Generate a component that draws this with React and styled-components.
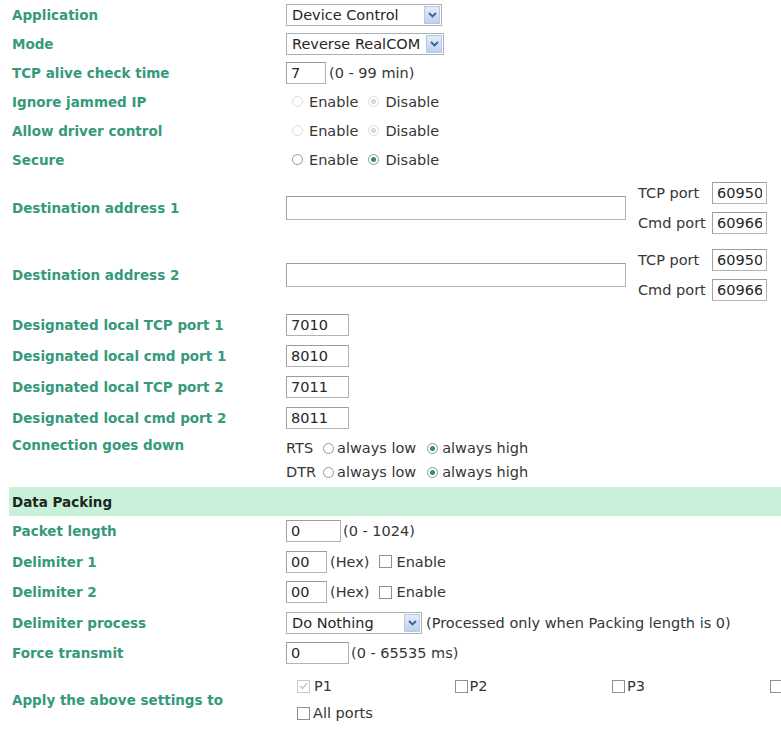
import React from "react";
import styled, { createGlobalStyle } from "styled-components";

const GlobalStyle = createGlobalStyle`
  html, body {
    margin: 0;
    padding: 0;
    background: #ffffff;
    overflow: hidden;
  }
  body {
    font-family: "DejaVu Sans", Verdana, sans-serif;
  }
`;

const Page = styled.div`
  width: 781px;
  height: 731px;
  overflow: hidden;
  padding-left: 12px;
  box-sizing: border-box;
`;

const Row = styled.div`
  display: grid;
  grid-template-columns: 274px 1fr;
  align-items: center;
  height: ${({ $h }) => ($h ? $h : 29)}px;
`;

const Label = styled.div`
  font-size: 13.5px;
  font-weight: bold;
  color: #36997c;
  white-space: nowrap;
  align-self: ${({ $top }) => ($top ? "start" : "center")};
  padding-top: ${({ $top }) => ($top ? "4px" : "0")};
`;

const Value = styled.div`
  display: flex;
  align-items: center;
  font-size: 14.5px;
  color: #363636;
  white-space: nowrap;
  padding-left: ${({ $pad }) => ($pad ? $pad : 0)}px;
`;

const TextBox = styled.input`
  width: ${({ $w }) => ($w ? $w : 63)}px;
  height: ${({ $hgt }) => ($hgt ? $hgt : 22)}px;
  box-sizing: border-box;
  border: 1px solid #b2b2b2;
  border-top-color: #9c9c9c;
  border-left-color: #a2a2a2;
  padding: 0 4px;
  margin: 0;
  font-family: "DejaVu Sans", Verdana, sans-serif;
  font-size: 14.5px;
  color: #262626;
  background: #ffffff;
  outline: none;
`;

const Hint = styled.span`
  margin-left: ${({ $ml }) => ($ml ? $ml : 3)}px;
  color: #363636;
`;

const SelectBox = styled.div`
  width: ${({ $w }) => $w}px;
  height: 22px;
  box-sizing: border-box;
  border: 1px solid #a9b0b9;
  display: flex;
  align-items: center;
  justify-content: space-between;
  padding: 0 1px 0 5px;
  color: #262626;
  background: #ffffff;
`;

const SelectArrow = styled.span`
  width: 16px;
  height: 18px;
  box-sizing: border-box;
  border: 1px solid #b9c8e2;
  background: linear-gradient(#e4ecf9, #bed0ee);
  display: flex;
  align-items: center;
  justify-content: center;
`;

const Radio = styled.span`
  width: 11px;
  height: 11px;
  box-sizing: border-box;
  border-radius: 50%;
  border: 1px solid ${({ $off }) => ($off ? "#d8dcdc" : "#8a9a98")};
  background: #ffffff;
  display: inline-flex;
  align-items: center;
  justify-content: center;
  margin-left: ${({ $ml }) => ($ml ? $ml : 0)}px;
  &::after {
    content: "";
    display: ${({ $on }) => ($on ? "block" : "none")};
    width: 5px;
    height: 5px;
    border-radius: 50%;
    background: ${({ $off }) => ($off ? "#d4d8d8" : "#2f9068")};
  }
`;

const OptText = styled.span`
  margin-left: ${({ $ml }) => ($ml ? $ml : 4)}px;
  color: #363636;
`;

const Check = styled.span`
  width: 13px;
  height: 13px;
  box-sizing: border-box;
  border: 1px solid ${({ $off }) => ($off ? "#cacaca" : "#909090")};
  background: #ffffff;
  display: inline-flex;
  align-items: center;
  justify-content: center;
  margin-left: ${({ $ml }) => ($ml ? $ml : 0)}px;
`;

const PortGroup = styled.div`
  display: flex;
  flex-direction: column;
  gap: 8px;
  margin-left: 12px;
`;

const PortLine = styled.div`
  display: flex;
  align-items: center;
`;

const PortName = styled.span`
  width: 74px;
  color: #363636;
`;

const SignalStack = styled.div`
  display: flex;
  flex-direction: column;
  gap: 2px;
`;

const SignalLine = styled.div`
  display: flex;
  align-items: center;
  height: 22px;
`;

const SignalName = styled.span`
  width: 36px;
  color: #363636;
`;

const Band = styled.div`
  height: 29px;
  margin-left: -3px;
  padding-left: 3px;
  background: #c9f1da;
  display: flex;
  align-items: center;
  font-size: 13.5px;
  font-weight: bold;
  color: #1d2620;
`;

const PortsGrid = styled.div`
  display: grid;
  grid-template-columns: repeat(4, 157.5px);
  row-gap: 9px;
  padding-left: 11px;
`;

const PortPick = styled.div`
  display: flex;
  align-items: center;
  height: 18px;
  color: #363636;
  font-size: 14.5px;
`;

const Chevron = () => (
  <svg width="9" height="6" viewBox="0 0 9 6">
    <path d="M1 1 L4.5 4.5 L8 1" fill="none" stroke="#3d5f9e" strokeWidth="1.8" />
  </svg>
);

const Tick = () => (
  <svg width="9" height="8" viewBox="0 0 9 8">
    <path d="M1 4 L3.5 6.5 L8 1" fill="none" stroke="#c4c4c4" strokeWidth="1.4" />
  </svg>
);

const Select = ({ w, children }) => (
  <SelectBox $w={w}>
    <span>{children}</span>
    <SelectArrow>
      <Chevron />
    </SelectArrow>
  </SelectBox>
);

const EnableDisable = ({ off, on }) => (
  <Value $pad={6}>
    <Radio $off={off} $on={on === "enable"} />
    <OptText $ml={6}>Enable</OptText>
    <Radio $off={off} $on={on === "disable"} $ml={10} />
    <OptText $ml={6}>Disable</OptText>
  </Value>
);

const Destination = ({ label }) => (
  <Row $h={67.5}>
    <Label>{label}</Label>
    <Value>
      <TextBox $w={340} $hgt={24} readOnly value="" />
      <PortGroup>
        <PortLine>
          <PortName>TCP port</PortName>
          <TextBox $w={55} readOnly value="60950" />
        </PortLine>
        <PortLine>
          <PortName>Cmd port</PortName>
          <TextBox $w={55} readOnly value="60966" />
        </PortLine>
      </PortGroup>
    </Value>
  </Row>
);

const Signal = ({ name }) => (
  <SignalLine>
    <SignalName>{name}</SignalName>
    <Radio $ml={1} />
    <OptText $ml={3}>always low</OptText>
    <Radio $on $ml={11} />
    <OptText $ml={4}>always high</OptText>
  </SignalLine>
);

const Delimiter = ({ label }) => (
  <Row $h={30.5}>
    <Label>{label}</Label>
    <Value>
      <TextBox $w={41} readOnly value="00" />
      <Hint $ml={3}>(Hex)</Hint>
      <Check $ml={10} />
      <OptText $ml={4}>Enable</OptText>
    </Value>
  </Row>
);

const designated = [
  ["Designated local TCP port 1", "7010"],
  ["Designated local cmd port 1", "8010"],
  ["Designated local TCP port 2", "7011"],
  ["Designated local cmd port 2", "8011"],
];

export default function App() {
  return (
    <Page>
      <GlobalStyle />
      <Row>
        <Label>Application</Label>
        <Value>
          <Select w={156}>Device Control</Select>
        </Value>
      </Row>
      <Row>
        <Label>Mode</Label>
        <Value>
          <Select w={158}>Reverse RealCOM</Select>
        </Value>
      </Row>
      <Row>
        <Label>TCP alive check time</Label>
        <Value>
          <TextBox $w={40} readOnly value="7" />
          <Hint>(0 - 99 min)</Hint>
        </Value>
      </Row>
      <Row>
        <Label>Ignore jammed IP</Label>
        <EnableDisable off on="disable" />
      </Row>
      <Row>
        <Label>Allow driver control</Label>
        <EnableDisable off on="disable" />
      </Row>
      <Row>
        <Label>Secure</Label>
        <EnableDisable on="disable" />
      </Row>

      <Destination label="Destination address 1" />
      <Destination label="Destination address 2" />

      {designated.map(([label, port]) => (
        <Row key={label} $h={31}>
          <Label>{label}</Label>
          <Value>
            <TextBox $w={63} readOnly value={port} />
          </Value>
        </Row>
      ))}

      <Row $h={54}>
        <Label $top>Connection goes down</Label>
        <Value>
          <SignalStack>
            <Signal name="RTS" />
            <Signal name="DTR" />
          </SignalStack>
        </Value>
      </Row>

      <Band>Data Packing</Band>

      <Row $h={30.5}>
        <Label>Packet length</Label>
        <Value>
          <TextBox $w={55} readOnly value="0" />
          <Hint $ml={2}>(0 - 1024)</Hint>
        </Value>
      </Row>
      <Delimiter label="Delimiter 1" />
      <Delimiter label="Delimiter 2" />
      <Row $h={30.5}>
        <Label>Delimiter process</Label>
        <Value>
          <Select w={136}>Do Nothing</Select>
          <Hint $ml={4}>(Processed only when Packing length is 0)</Hint>
        </Value>
      </Row>
      <Row $h={30.5}>
        <Label>Force transmit</Label>
        <Value>
          <TextBox $w={63} readOnly value="0" />
          <Hint $ml={2}>(0 - 65535 ms)</Hint>
        </Value>
      </Row>

      <Row $h={62}>
        <Label>Apply the above settings to</Label>
        <PortsGrid>
          <PortPick>
            <Check $off>
              <Tick />
            </Check>
            <OptText $ml={4}>P1</OptText>
          </PortPick>
          <PortPick>
            <Check />
            <OptText $ml={2}>P2</OptText>
          </PortPick>
          <PortPick>
            <Check />
            <OptText $ml={2}>P3</OptText>
          </PortPick>
          <PortPick>
            <Check />
          </PortPick>
          <PortPick>
            <Check />
            <OptText $ml={3}>All ports</OptText>
          </PortPick>
        </PortsGrid>
      </Row>
    </Page>
  );
}
